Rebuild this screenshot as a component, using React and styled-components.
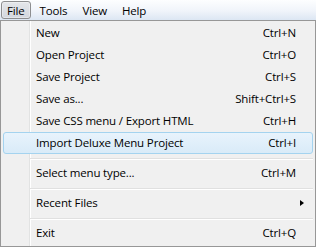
import React from "react";
import styled, { createGlobalStyle } from "styled-components";

const GlobalStyle = createGlobalStyle`
  html, body {
    margin: 0;
    background: #f0f0f0;
    font-family: "Open Sans", "Noto Sans", sans-serif;
    font-size: 11.5px;
    letter-spacing: -0.15px;
    color: #000;
  }
`;

const Window = styled.div`
  width: 316px;
  height: 247px;
  overflow: hidden;
`;

const MenuBar = styled.div`
  height: 20px;
  display: flex;
  align-items: flex-start;
  padding-left: 1px;
  box-sizing: border-box;
  background: linear-gradient(#fdfeff, #f0f4fa 55%, #dce6f3);
`;

const BarItem = styled.div`
  height: 18px;
  margin-top: 1px;
  margin-right: 3px;
  padding: 0 5px;
  display: flex;
  align-items: center;
  border: 1px solid ${({ $active }) => ($active ? "#8d8e90" : "transparent")};
  border-radius: 3px;
  box-sizing: border-box;
  background: ${({ $active }) =>
    $active ? "linear-gradient(#e4e6ea, #d3d7de)" : "transparent"};
  box-shadow: ${({ $active }) =>
    $active ? "inset 0 0 0 1px rgba(255,255,255,0.35)" : "none"};
`;

const Dropdown = styled.div`
  border: 1px solid #979797;
  padding: 1px 2px;
  height: 227px;
  box-sizing: border-box;
  background: linear-gradient(
    to right,
    #f0f0f0 0,
    #f0f0f0 28px,
    #e2e3e3 28px,
    #e2e3e3 29px,
    #ffffff 29px,
    #ffffff 30px,
    #f0f0f0 30px
  );
`;

const Item = styled.div`
  height: 22px;
  display: grid;
  grid-template-columns: 1fr auto 8px;
  align-items: center;
  padding: 0 8px 0 32px;
  box-sizing: border-box;
  border: 1px solid ${({ $hot }) => ($hot ? "#a4d3ef" : "transparent")};
  border-radius: 3px;
  background: ${({ $hot }) =>
    $hot ? "linear-gradient(#e8f3fc, #d9ebf8)" : "transparent"};
  white-space: nowrap;
`;

const Label = styled.span`
  line-height: 20px;
`;

const Shortcut = styled.span`
  line-height: 20px;
  text-align: right;
`;

const Arrow = styled.span`
  justify-self: end;
  width: 0;
  height: 0;
  border-left: 4px solid #000;
  border-top: 3.5px solid transparent;
  border-bottom: 3.5px solid transparent;
`;

const Separator = styled.div`
  height: 8px;
  padding-top: 4px;
  margin-left: 27px;
  box-sizing: border-box;
  &::before {
    content: "";
    display: block;
    height: 1px;
    background: #e0e0e0;
    border-bottom: 1px solid #ffffff;
  }
`;

const menu = [
  { label: "New", key: "Ctrl+N" },
  { label: "Open Project", key: "Ctrl+O" },
  { label: "Save Project", key: "Ctrl+S" },
  { label: "Save as...", key: "Shift+Ctrl+S" },
  { label: "Save CSS menu / Export HTML", key: "Ctrl+H" },
  { label: "Import Deluxe Menu Project", key: "Ctrl+I", hot: true },
  { sep: true },
  { label: "Select menu type...", key: "Ctrl+M" },
  { sep: true },
  { label: "Recent Files", sub: true },
  { sep: true },
  { label: "Exit", key: "Ctrl+Q" },
];

export default function App() {
  return (
    <Window>
      <GlobalStyle />
      <MenuBar>
        <BarItem $active>File</BarItem>
        <BarItem>Tools</BarItem>
        <BarItem>View</BarItem>
        <BarItem>Help</BarItem>
      </MenuBar>
      <Dropdown>
        {menu.map((m, i) =>
          m.sep ? (
            <Separator key={i} />
          ) : (
            <Item key={i} $hot={m.hot}>
              <Label>{m.label}</Label>
              <Shortcut>{m.key}</Shortcut>
              {m.sub ? <Arrow /> : <span />}
            </Item>
          )
        )}
      </Dropdown>
    </Window>
  );
}
